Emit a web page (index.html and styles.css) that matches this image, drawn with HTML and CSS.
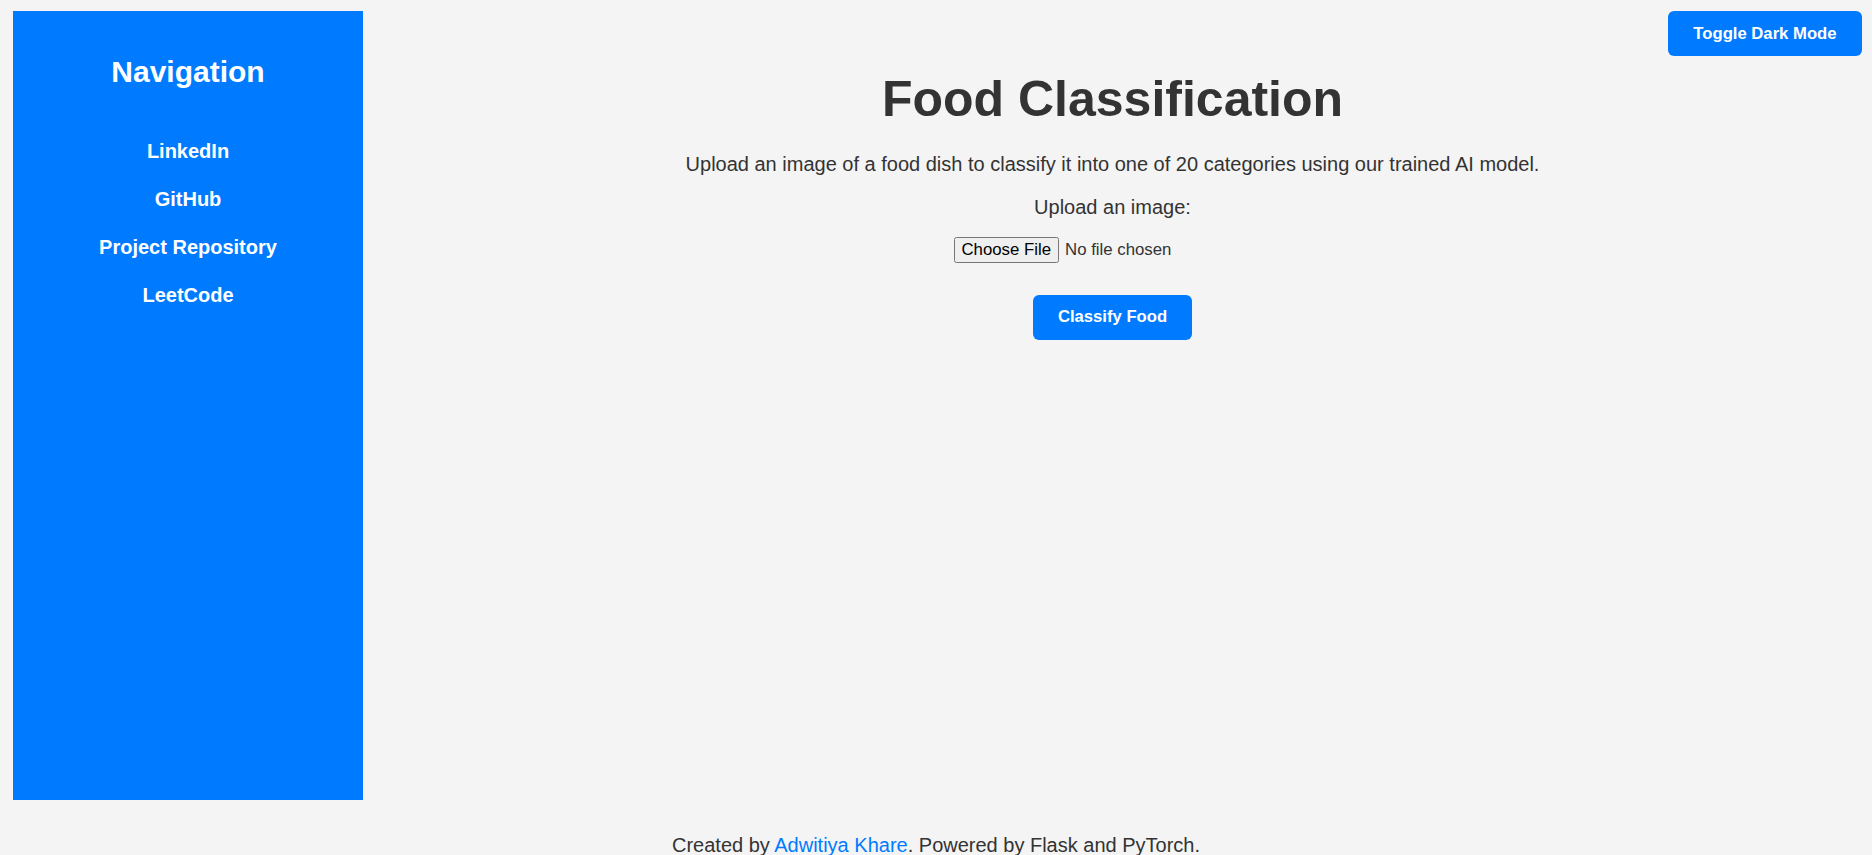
FILE: index.html
```html
<!DOCTYPE html>
<html lang="en">
<head>
<meta charset="utf-8">
<title>Food Classification</title>
<link rel="stylesheet" href="styles.css">
</head>
<body>
<button class="toggle-btn" type="button">Toggle Dark Mode</button>
<div class="layout">
  <nav class="sidebar">
    <h2 class="sidebar-title">Navigation</h2>
    <ul class="nav-list">
      <li><a class="nav-link" href="#">LinkedIn</a></li>
      <li><a class="nav-link" href="#">GitHub</a></li>
      <li><a class="nav-link" href="#">Project Repository</a></li>
      <li><a class="nav-link" href="#">LeetCode</a></li>
    </ul>
  </nav>
  <main class="main">
    <h1 class="title">Food Classification</h1>
    <p class="description">Upload an image of a food dish to classify it into one of 20 categories using our trained AI model.</p>
    <form class="upload-form">
      <label class="upload-label" for="file">Upload an image:</label>
      <input class="file-input" id="file" type="file">
      <button class="classify-btn" type="button">Classify Food</button>
    </form>
  </main>
</div>
<footer class="footer">Created by <a class="footer-link" href="#">Adwitiya Khare</a>. Powered by Flask and PyTorch.</footer>
</body>
</html>
```

FILE: styles.css
```css
* { box-sizing: border-box; }

html, body {
  margin: 0;
  padding: 0;
}

body {
  background: #f4f4f4;
  color: #333333;
  font-family: "Liberation Sans", Arial, sans-serif;
  font-size: 20px;
  line-height: 23px;
}

.toggle-btn {
  position: fixed;
  top: 11px;
  right: 10px;
  background: #007bff;
  color: #ffffff;
  border: none;
  border-radius: 6px;
  font-family: "Liberation Sans", Arial, sans-serif;
  font-weight: bold;
  font-size: 16.67px;
  line-height: 20px;
  padding: 12.5px 25.5px;
  cursor: pointer;
}

.layout {
  display: flex;
  padding: 11px 10px 0 13px;
}

.sidebar {
  width: 350px;
  height: 789px;
  flex: 0 0 350px;
  background: #007bff;
  padding-top: 44px;
  text-align: center;
}

.sidebar-title {
  margin: 0;
  color: #ffffff;
  font-size: 30px;
  line-height: 34.5px;
  font-weight: bold;
}

.nav-list {
  list-style: none;
  margin: 50px 0 0;
  padding: 0;
}

.nav-list li {
  margin-bottom: 25.2px;
}

.nav-link {
  color: #ffffff;
  text-decoration: none;
  font-weight: bold;
  font-size: 20px;
  line-height: 23px;
}

.main {
  flex: 1;
  display: flex;
  flex-direction: column;
  align-items: center;
  text-align: center;
}

.title {
  margin: 60px 0 0;
  font-size: 50px;
  line-height: 57.5px;
  font-weight: bold;
  color: #333333;
}

.description {
  margin: 24px 0 0;
}

.upload-form {
  display: flex;
  flex-direction: column;
  align-items: center;
}

.upload-label {
  display: block;
  margin-top: 20px;
}

.file-input {
  margin-top: 18.5px;
  font-family: "Liberation Sans", Arial, sans-serif;
  font-size: 16.8px;
  color: #333333;
}

.file-input::file-selector-button {
  margin-inline-end: 6px;
}

.classify-btn {
  margin-top: 31.5px;
  background: #007bff;
  color: #ffffff;
  border: none;
  border-radius: 6px;
  font-family: "Liberation Sans", Arial, sans-serif;
  font-weight: bold;
  font-size: 16.67px;
  line-height: 20px;
  padding: 12.5px 25px;
  cursor: pointer;
}

.footer {
  margin-top: 33.5px;
  text-align: center;
}

.footer-link {
  color: #007bff;
  text-decoration: none;
}
```
